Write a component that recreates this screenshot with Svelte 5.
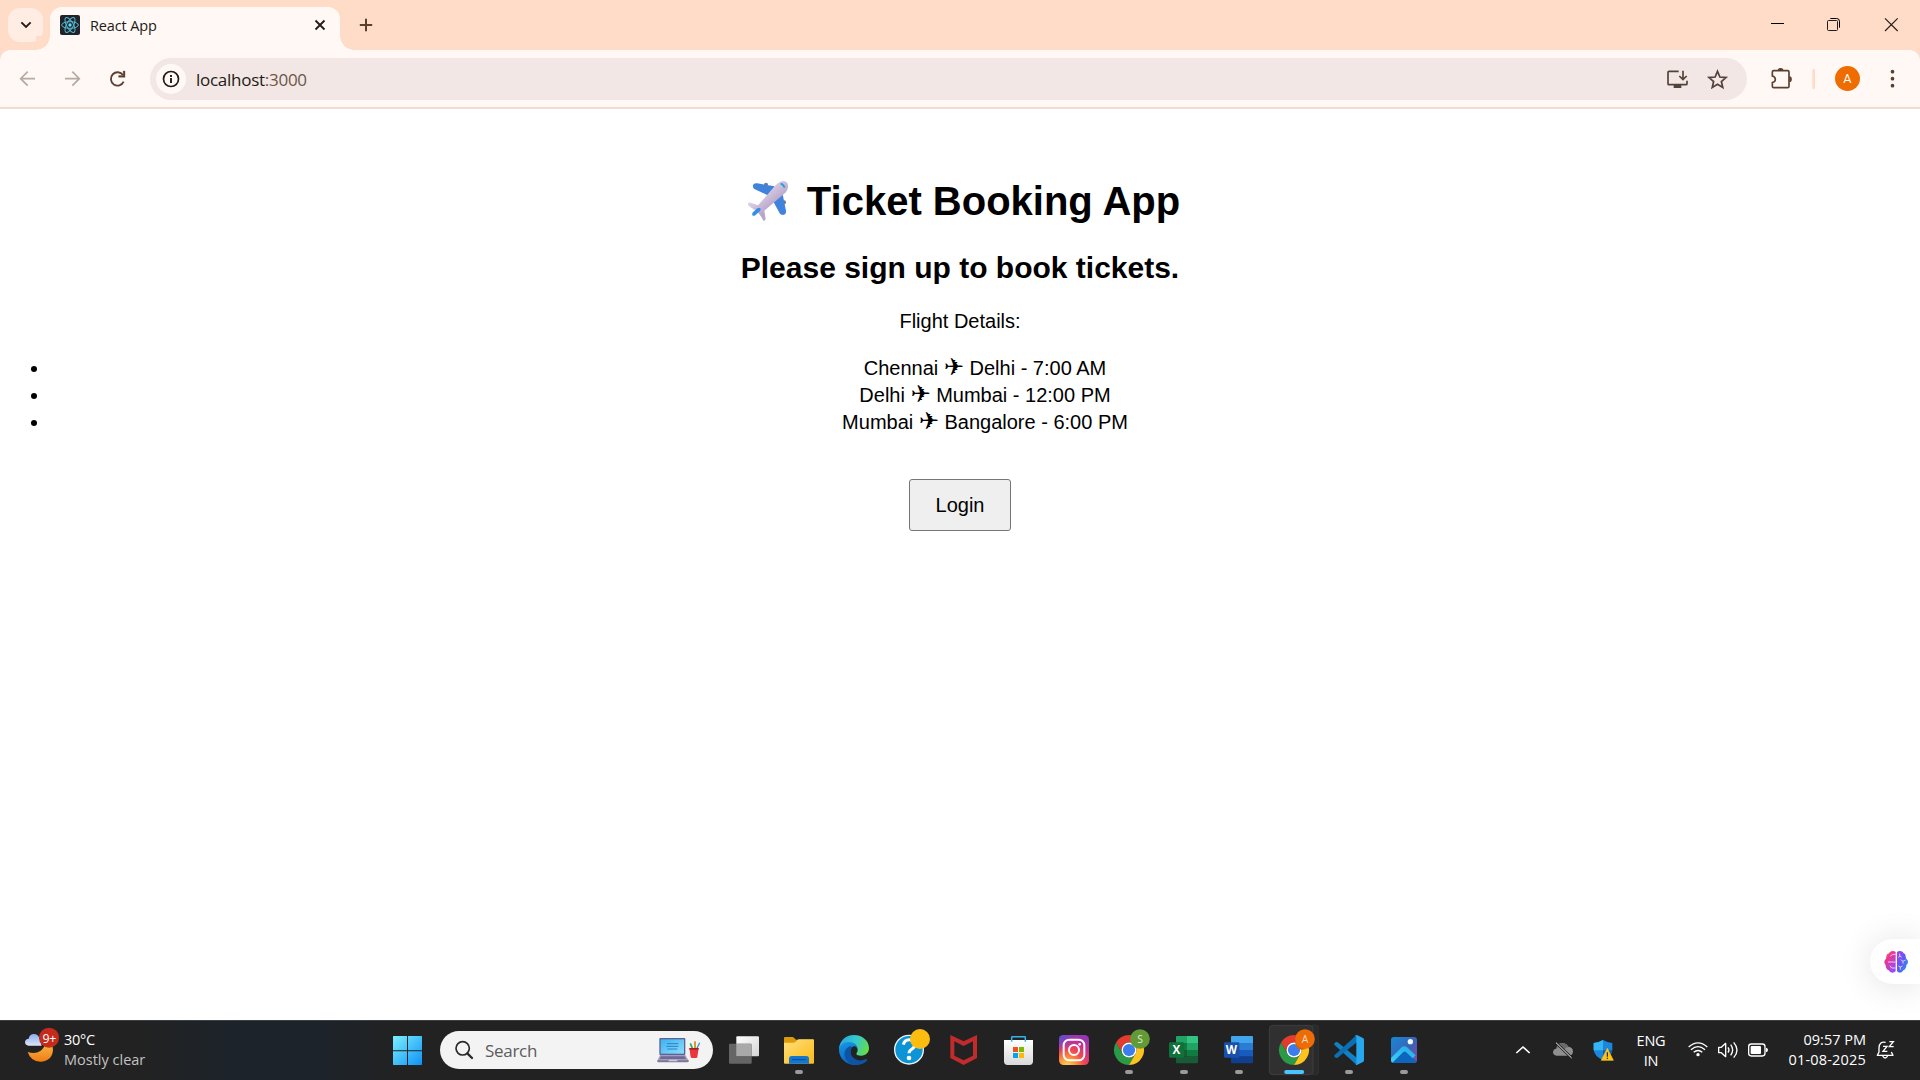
<script>
  const flights = [
    'Chennai|Delhi - 7:00 AM',
    'Delhi|Mumbai - 12:00 PM',
    'Mumbai|Bangalore - 6:00 PM'
  ].map((f) => f.split('|'));
</script>

{#snippet chromeLogo(x, y)}
  <g transform="translate({x} {y}) scale(1.875)">
    <path fill="#e33b2e" d="M44.785 12A24 24 0 0 0 3.215 12L13.607 30A12 12 0 0 1 24 12Z" />
    <path fill="#2a9a47" d="M3.215 12A24 24 0 0 0 24 48L34.392 30A12 12 0 0 1 13.608 30Z" />
    <path fill="#fcc31e" d="M24 48A24 24 0 0 0 44.785 12L24 12A12 12 0 0 1 34.392 30Z" />
    <circle cx="24" cy="24" r="12" fill="#fff" />
    <circle cx="24" cy="24" r="9.8" fill="#3b7ded" />
  </g>
{/snippet}

{#snippet taskView()}
  <defs>
    <linearGradient id="tv" x1="0" y1="0" x2="1" y2="1"><stop offset="0" stop-color="#fff" /><stop offset="1" stop-color="#d4d4d4" /></linearGradient>
  </defs>
  <rect x="79" y="79" width="68" height="60" rx="3" fill="url(#tv)" />
  <rect x="57" y="101" width="68" height="60" rx="3" fill="#6b6b6b" opacity=".92" />
  <rect x="79" y="101" width="45" height="37" fill="#a9a9a9" />
{/snippet}

{#snippet explorer()}
  <defs>
    <linearGradient id="ex" x1="0" y1="0" x2="1" y2="1"><stop offset="0" stop-color="#ffe07c" /><stop offset="1" stop-color="#fbba16" /></linearGradient>
  </defs>
  <path d="M222 84q0-3 3-3h22q3 0 5 2l6 6h51q3 0 3 3v20h-90z" fill="#dd9a0b" />
  <path d="M222 98h28q4 0 7-3l5-5q2-2 5-2h42q3 0 3 3v67q0 3-3 3h-84q-3 0-3-3z" fill="url(#ex)" />
  <path d="M237 161v-15q0-8 8-8h44q8 0 8 8v15z" fill="#1477cf" />
  <path d="M247 149h39" stroke="#0b4a8c" stroke-width="3" stroke-linecap="round" />
{/snippet}

{#snippet edge()}
  <defs>
    <linearGradient id="e1" x1="0" y1=".3" x2="1" y2=".6"><stop offset="0" stop-color="#2aa5e0" /><stop offset=".5" stop-color="#35c8cf" /><stop offset="1" stop-color="#66dd48" /></linearGradient>
    <linearGradient id="e2" x1="0" y1="0" x2=".4" y2="1"><stop offset="0" stop-color="#1698e4" /><stop offset="1" stop-color="#0a62c2" /></linearGradient>
  </defs>
  <path d="M387 119C387 93 407 75 432 75c26 0 45 18 45 39 0 14-10 23-23 23-10 0-15-3-15-6 0-2 4-4 4-11 0-9-9-17-22-17-14 0-27 7-34 16z" fill="url(#e1)" />
  <path d="M387 120c1-14 14-24 29-24 17 0 27 10 27 20 0 0-4-7-10-7-7 0-12 8-12 16 0 16 13 28 29 28 9 0 15-3 18-4 3-1 4 1 2 3-8 9-21 13-35 13-26 0-48-20-48-45z" fill="url(#e2)" />
  <path d="M421 108c-13 5-20 17-17 30 3 14 14 24 28 27 16 0 29-5 37-14 3-3 1-5-2-3-13 6-30 4-39-7-8-9-8-22-1-29z" fill="#0d55a4" />
{/snippet}

{#snippet help()}
  <circle cx="597" cy="119" r="43" fill="#0d94d6" stroke="#eef3f6" stroke-width="4" />
  <path d="M580 104q3-15 18-15 17 0 17 14 0 8-9 14-9 5-9 13" fill="none" stroke="#fff" stroke-width="9" />
  <circle cx="597" cy="144" r="7" fill="#fff" />
  <circle cx="630" cy="87" r="30" fill="#fdbd10" />
{/snippet}

{#snippet mcafee()}
  <path d="M721 75l40 19 40-19v69l-40 21-40-21zM733 94v43l28 14 28-14V94l-28 14z" fill="#c22b2b" fill-rule="evenodd" />
{/snippet}

{#snippet store()}
  <defs>
    <linearGradient id="st" x1="0" y1="0" x2="0" y2="1"><stop offset="0" stop-color="#fff" /><stop offset="1" stop-color="#d9d9d9" /></linearGradient>
  </defs>
  <path d="M882 90h87v64q0 11-11 11h-65q-11 0-11-11z" fill="url(#st)" />
  <path d="M905 95V82q0-2 2-2h37q2 0 2 2v13" fill="none" stroke="#30b4ee" stroke-width="4.5" />
  <rect x="909" y="111" width="15" height="15" fill="#f25022" /><rect x="927" y="111" width="15" height="15" fill="#7fba00" />
  <rect x="909" y="129" width="15" height="15" fill="#00a4ef" /><rect x="927" y="129" width="15" height="15" fill="#ffb900" />
{/snippet}

{#snippet instagram()}
  <defs>
    <radialGradient id="ig" cx=".28" cy="1.05" r="1.1"><stop offset="0" stop-color="#ffd75a" /><stop offset=".25" stop-color="#fc9a3e" /><stop offset=".5" stop-color="#f24a4d" /><stop offset=".75" stop-color="#cb2f91" /><stop offset="1" stop-color="#9636b4" /></radialGradient>
    <radialGradient id="ig2" cx="0" cy="0" r=".6"><stop offset="0" stop-color="#4759d8" /><stop offset="1" stop-color="#7b3fcf" stop-opacity="0" /></radialGradient>
  </defs>
  <rect x="27" y="75" width="90" height="90" rx="14" fill="url(#ig)" />
  <rect x="27" y="75" width="90" height="90" rx="14" fill="url(#ig2)" />
  <rect x="41" y="89" width="62" height="62" rx="17" fill="none" stroke="#fff" stroke-width="6" />
  <circle cx="72" cy="120" r="15" fill="none" stroke="#fff" stroke-width="6" />
  <circle cx="89" cy="103" r="4" fill="#fff" />
{/snippet}

{#snippet chromeS()}
  {@render chromeLogo(192, 75)}
  <circle cx="270" cy="87" r="29.5" fill="#629b35" />
  <text class="badge" x="270" y="98" fill="#e3ecd9">S</text>
{/snippet}

{#snippet chromeA()}
  <path d="M786 45h10q10 0 10 10v130q0 9-10 9h-10" fill="#2a2a2a" stroke="#383838" stroke-width="2" />
  <rect x="658" y="46" width="131" height="148" rx="11" fill="#303030" stroke="#424242" stroke-width="2.5" />
  {@render chromeLogo(687, 75)}
  <circle cx="756" cy="99" r="20" fill="#d85f08" />
  <circle cx="765" cy="87" r="29.5" fill="#ed6c05" />
  <text class="badge" x="765" y="98" fill="#f7dcc8">A</text>
{/snippet}

{#snippet excel()}
  <path d="M378 81q0-3 3-3h30v21h-33z" fill="#21a366" /><path d="M411 78h30q3 0 3 3v18h-33z" fill="#33c481" />
  <path d="M378 99h33v21h-33z" fill="#107c41" /><path d="M411 99h33v21h-33z" fill="#21a366" />
  <path d="M378 120h33v20h-33z" fill="#185c37" /><path d="M411 120h33v20h-33z" fill="#107c41" />
  <path d="M378 140h66v17q0 3-3 3h-60q-3 0-3-3z" fill="#185c37" />
  <rect x="357" y="97" width="46" height="46" rx="4" fill="#10713c" />
  <text class="office" x="379.500" y="132">X</text>
{/snippet}

{#snippet word()}
  <path d="M543 81q0-3 3-3h60q3 0 3 3v18h-66z" fill="#41a5ee" />
  <path d="M543 99h66v21h-66z" fill="#2b7cd3" /><path d="M543 120h66v20h-66z" fill="#185abd" />
  <path d="M543 140h66v17q0 3-3 3h-60q-3 0-3-3z" fill="#103f91" />
  <rect x="522" y="97" width="46" height="46" rx="4" fill="#1851ab" />
  <text class="office" x="544" y="132">W</text>
{/snippet}

{#snippet vscode()}
  <path d="M855 98q3-4 8-1l61 49-5 18-66-60q-2-3 2-6z" fill="#1280c4" />
  <path d="M855 142q3 4 8 1l61-49-5-18-66 60q-2 3 2 6z" fill="#0a6fb5" />
  <path d="M917 75q2 0 5 1l17 8q3 2 3 5v62q0 3-3 5l-17 8q-4 2-7-1 4 2 4-4V81q0-5-5-5 1-1 3-1z" fill="#27a8ee" />
{/snippet}

{#snippet photos()}
  <defs>
    <linearGradient id="ph" x1="0" y1="0" x2="1" y2="1"><stop offset="0" stop-color="#1688d8" /><stop offset=".55" stop-color="#3b62b4" /><stop offset="1" stop-color="#8a48a8" /></linearGradient>
    <linearGradient id="ph2" x1="0" y1="1" x2="1" y2="0"><stop offset="0" stop-color="#35d4f5" /><stop offset="1" stop-color="#28a9e8" /></linearGradient>
    <clipPath id="phc"><rect x="1023" y="81" width="78" height="78" rx="9" /></clipPath>
  </defs>
  <g clip-path="url(#phc)">
    <rect x="1023" y="81" width="78" height="78" fill="url(#ph)" />
    <path d="M1030 159l32-38 39 34v4z" fill="#0c66bd" />
    <path d="M1020 159v-12l35-35q8-7 16 0l26 24-9 9-20-19q-4-3-8 0l-34 33z" fill="url(#ph2)" />
  </g>
  <circle cx="1081" cy="95" r="8" fill="#f4f7fb" />
{/snippet}

{#snippet slot(x, art, state)}
  <button class="app" aria-label="app">
    <svg width="55" height="60" viewBox="{x - 1.5} 30 165 180">
      {@render art()}
      {#if state === 'open'}
        <rect x={x + 70.5} y="180" width="24" height="12" rx="6" fill="#9a9a9a" />
      {:else if state === 'active'}
        <rect x={x + 53} y="180" width="60" height="12" rx="6" fill="#4cc2ff" />
      {/if}
    </svg>
  </button>
{/snippet}

<div class="screen">
  <header class="tabs">
    <button class="tab-search" aria-label="Search tabs">
      <svg width="35" height="34" viewBox="24 24 105 102"><path d="M66 69l12 12 12-12" fill="none" stroke="#231a16" stroke-width="5.500" stroke-linecap="square" /></svg>
    </button>
    <div class="tab">
      <svg class="fav" width="20" height="20" viewBox="0 0 60 60">
        <rect width="60" height="60" rx="6" fill="#20232a" />
        <g fill="none" stroke="#53b9d3" stroke-width="3">
          <ellipse cx="30" cy="30" rx="25" ry="10" /><ellipse cx="30" cy="30" rx="25" ry="10" transform="rotate(60 30 30)" /><ellipse cx="30" cy="30" rx="25" ry="10" transform="rotate(120 30 30)" />
        </g>
        <circle cx="30" cy="30" r="5" fill="#61dafb" />
      </svg>
      <span class="tab-title">React App</span>
      <svg class="tab-x" width="12" height="12" viewBox="0 0 12 12"><path d="M1.500 1.500l9 9M10.500 1.500l-9 9" stroke="#231a16" stroke-width="1.800" /></svg>
    </div>
    <svg class="plus" width="14" height="14" viewBox="0 0 14 14"><path d="M7 .8v12.400M.8 7h12.400" stroke="#5a4030" stroke-width="2" /></svg>
    <svg class="win" width="160" height="50" viewBox="420 0 480 150" fill="none">
      <path d="M453 70.500h39" stroke="#000" stroke-width="3" />
      <rect x="622.500" y="61.500" width="30" height="30" rx="3" stroke="#241b16" stroke-width="3" />
      <path d="M631 55.500h19q8.500 0 8.500 8.500v19" stroke="#000" stroke-width="3" />
      <path d="M795 55l38 38M833 55l-38 38" stroke="#2a1e18" stroke-width="3.600" />
    </svg>
  </header>

  <nav class="toolbar">
    <svg class="nav-icons" width="150" height="58" viewBox="0 150 450 174" fill="none">
      <g stroke="#b7a9a3" stroke-width="5"><path d="M105 236H64M83 215l-21 21 21 21" /><path d="M195 236h41M217 215l21 21-21 21" /></g>
      <path d="M369 225a20 20 0 1 0 2 20" stroke="#5a4030" stroke-width="5.500" />
      <path d="M375 213v19h-19v-5.500h13.500V213z" fill="#5a4030" stroke="#5a4030" stroke-width="1" />
    </svg>
    <div class="omnibox">
      <svg class="info" width="30" height="30" viewBox="0 0 30 30"><circle cx="15" cy="15" r="15" fill="#fff8f5" /><circle cx="15" cy="15" r="7.500" fill="none" stroke="#231a16" stroke-width="1.700" /><path d="M15 14v5M15 11v1.900" stroke="#231a16" stroke-width="1.900" /></svg>
      <span class="url">localhost<span>:3000</span></span>
      <svg class="omni-icons" width="80" height="42" viewBox="141 174 240 126" fill="none" stroke="#54423a">
        <path d="M176 214h-29q-3 0-3 3v34q0 3 3 3h51q3 0 3-3v-9" stroke-width="5" />
        <path d="M161 254h23v10h-23z" fill="#54423a" stroke="none" />
        <path d="M189 212v26M178 228l11 11 11-11" stroke-width="5" />
        <path d="M292.500 214l7.200 17 18.300 1.600-13.900 12.100 4.200 17.900-15.800-9.500-15.800 9.500 4.200-17.900-13.900-12.100 18.300-1.600z" stroke-width="5.200" />
      </svg>
    </div>
    <svg class="tool-icons" width="173" height="58" viewBox="381 150 519 174" fill="none">
      <path d="M461 212h42q4 0 4 4v43q0 4-4 4h-42q-4 0-4-4v-11q9-2 9-10t-9-10v-12q0-4 4-4z" stroke="#5a4030" stroke-width="5" />
      <path d="M473 211a8.500 7 0 0 1 17 0zM508 229a7.500 9 0 0 1 0 18z" fill="#5a4030" />
      <rect x="577" y="207" width="8" height="60" rx="3" fill="#ffdcc8" />
      <circle cx="682.500" cy="235.500" r="37.500" fill="#ef6c00" />
      <text class="avatar" x="682.500" y="249.500">A</text>
      <g fill="#5a4030"><circle cx="817.500" cy="215" r="5.500" /><circle cx="817.500" cy="236" r="5.500" /><circle cx="817.500" cy="257" r="5.500" /></g>
    </svg>
  </nav>

  <main>
    <h1>
      <svg class="plane" width="42" height="42" viewBox="81 60 126 126">
        <defs>
          <linearGradient id="body" x1=".3" y1=".3" x2=".6" y2=".65"><stop offset="0" stop-color="#ddd3e4" /><stop offset="1" stop-color="#b9a5cb" /></linearGradient>
        </defs>
        <ellipse cx="138" cy="73" rx="6" ry="5" fill="#7e7380" /><ellipse cx="193" cy="127" rx="5" ry="6" fill="#7e7380" />
        <path d="M99 75q3-7 13-5l52 9-18 28-43-20q-5-3-4-12z" fill="#3f83dd" />
        <path d="M188 103l10 50q1 10-9 12-7 0-10-5l-20-37z" fill="#3f83dd" />
        <path d="M84 130q3-3 8-2l22 8 54-62q15-15 30-9 9 6 5 21-2 6-7 12l-63 54 4 25q-1 6-7 5-6-13-15-23-6-4-12-10-13-7-19-14z" fill="url(#body)" />
        <path d="M182 71q8 2 12 12" fill="none" stroke="#1ba3e6" stroke-width="5" />
        <path d="M97 166q-2-5 2-9l13-12q6-3 9 0 3 4-2 9l-13 12q-5 3-9 0z" fill="#368de8" />
      </svg>
      <span>Ticket Booking App</span>
    </h1>
    <h2>Please sign up to book tickets.</h2>
    <p>Flight Details:</p>
    <ul>
      {#each flights as [from, to]}
        <li>{from} <span class="sym">✈</span> {to}</li>
      {/each}
    </ul>
    <button class="login">Login</button>
  </main>

  <aside class="assistant">
    <svg width="24" height="24" viewBox="130 89 72 72">
      <defs>
        <linearGradient id="b1" x1="0" y1="0" x2=".6" y2="1"><stop offset="0" stop-color="#ff9a2e" /><stop offset=".35" stop-color="#f0368c" /><stop offset="1" stop-color="#9a4cf0" /></linearGradient>
        <linearGradient id="b2" x1="0" y1="0" x2="1" y2="1"><stop offset="0" stop-color="#a43df0" /><stop offset=".5" stop-color="#5c5cf2" /><stop offset="1" stop-color="#16a6f5" /></linearGradient>
      </defs>
      <path d="M165 95q-6-5-13-2-5 1-7 6-8 2-8 9 0 4-1 7-5 4-5 10t4 9q-1 7 3 11 2 4 6 5 4 7 11 7 6 0 10-4z" fill="url(#b1)" />
      <path d="M169 95q6-5 13-2 5 1 7 6 6 2 6 9 0 4 2 7 5 4 5 10t-5 9q1 7-3 11-2 4-6 5-3 7-10 7-5 0-9-4z" fill="url(#b2)" />
      <g fill="none" stroke="#f5ddfa" stroke-width="2.600"><path d="M165 102h-8l-8 5M142 125h23M148 136l5 7h12M177 100v8l6 2M177 108l-4 3M180 118l7 5 8-4M187 123v7M173 137l6 3 6-3M179 140v8" /></g>
    </svg>
  </aside>

  <footer>
    <div class="weather">
      <svg width="40" height="60" viewBox="69 30 120 180">
        <defs>
          <linearGradient id="moon" x1="0" y1="0" x2="0" y2="1"><stop offset="0" stop-color="#fbc04a" /><stop offset="1" stop-color="#f07c16" /></linearGradient>
          <linearGradient id="cl" x1="0" y1="0" x2="0" y2="1"><stop offset="0" stop-color="#88acec" /><stop offset="1" stop-color="#dce6f8" /></linearGradient>
        </defs>
        <path d="M139 91q20 9 20 29-3 34-38 35-29-1-38-29 22 8 38-3 16-12 18-32z" fill="url(#moon)" />
        <path d="M86 107q-11-1-11-11 1-9 11-10 3-14 15-14 13 0 17 12l7 23z" fill="url(#cl)" />
        <circle cx="147" cy="83" r="30" fill="#c42b1c" />
        <text class="count" x="147.500" y="98">9+</text>
      </svg>
      <div><span class="temp">30°C</span><span class="cond">Mostly clear</span></div>
    </div>
    <div class="apps">
      <svg class="start" width="55" height="60" viewBox="0 30 165 180">
        <defs><linearGradient id="w" gradientUnits="userSpaceOnUse" x1="39" y1="78" x2="125" y2="164"><stop offset="0" stop-color="#7bf0fd" /><stop offset="1" stop-color="#0f93f5" /></linearGradient></defs>
        <path d="M41 78h40v43H39V80q0-2 2-2zM84 78h40q2 0 2 2v41H84zM39 124h42v41H41q-2 0-2-2zM84 124h42v39q0 2-2 2H84z" fill="url(#w)" />
      </svg>
      <div class="search">
        <svg width="20" height="20" viewBox="219 91 60 60" fill="none"><circle cx="245" cy="116" r="20" stroke="#2a2a2a" stroke-width="5" /><path d="M259 131l14 14" stroke="#2a2a2a" stroke-width="7" stroke-linecap="round" /></svg>
        <span>Search</span>
        <svg class="desk" width="44" height="26" viewBox="827 84 132 78">
          <defs><linearGradient id="scr" x1="0" y1="0" x2="1" y2="1"><stop offset="0" stop-color="#3db2f0" /><stop offset="1" stop-color="#8fdcfb" /></linearGradient></defs>
          <rect x="834" y="87" width="78" height="51" rx="3" fill="#5a6490" /><rect x="838" y="91" width="70" height="43" fill="url(#scr)" />
          <path d="M857 104h34M855 112h36M858 120h30" stroke="#2484cc" stroke-width="3" />
          <path d="M836 138h76l10 17q0 4-4 4h-86q-4 0-4-4z" fill="#a39fc0" /><path d="M839 142h70l5 8h-79z" fill="#6f6a92" /><path d="M828 154h94v2q0 4-4 4h-86q-4 0-4-4z" fill="#7d7794" /><path d="M863 152h24l2 5h-28z" fill="#cdc7df" />
          <path d="M933 118l-6-15" stroke="#3aa55a" stroke-width="5" /><path d="M941 118V97" stroke="#d59b2d" stroke-width="6" /><path d="M947 118l8-17" stroke="#3e8dd6" stroke-width="4" />
          <path d="M924 117h28l-4 28q-1 2-4 2h-12q-3 0-4-2z" fill="#e8383d" /><path d="M924 117h28l-1 5h-26z" fill="#a91f28" />
        </svg>
      </div>
      <div class="pinned">
        {@render slot(19.5, taskView, '')}
        {@render slot(184.5, explorer, 'open')}
        {@render slot(349.5, edge, '')}
        {@render slot(514.5, help, '')}
        {@render slot(679.5, mcafee, '')}
        {@render slot(844.5, store, '')}
        {@render slot(-10.5, instagram, '')}
        {@render slot(154.5, chromeS, 'open')}
        {@render slot(319.5, excel, 'open')}
        {@render slot(484.5, word, 'open')}
        {@render slot(649.5, chromeA, 'active')}
        {@render slot(814.5, vscode, 'open')}
        {@render slot(979.5, photos, 'open')}
      </div>
    </div>
    <div class="tray">
      <svg width="121" height="60" viewBox="69 30 363 180" fill="none">
        <path d="M109 129l20-18 20 18" stroke="#fff" stroke-width="5" />
        <path d="M230 137q-11-1-11-11 1-9 10-10 1-15 16-17 13-1 20 11 14 1 14 15-1 11-12 12z" fill="#8f8f8f" />
        <path d="M238 103q10-7 19-1 6 3 8 9-9 1-12 8-9-10-22-6 1-7 7-10z" fill="#6a6a6a" />
        <path d="M228 98l47 46" stroke="#232323" stroke-width="8" /><path d="M228 98l47 46" stroke="#eee" stroke-width="3" />
        <path d="M341 99q15-1 28-9 13 8 28 9v21q-3 20-28 30-25-10-28-30z" fill="#1b86dc" />
        <path d="M341 99q15-1 28-9v31h-28z" fill="#35b5f3" /><path d="M369 121h28q-3 20-28 29z" fill="#0c5cb4" />
        <path d="M382 115l18 36h-36z" fill="#fcc419" stroke="#fcc419" stroke-width="2" stroke-linejoin="round" /><path d="M382 127v13M382 143v4" stroke="#222" stroke-width="3.500" />
      </svg>
      <div class="lang"><span>ENG</span><span>IN</span></div>
      <svg width="100" height="60" viewBox="594 30 300 180" fill="none" stroke="#fff" stroke-width="4">
        <path d="M626 111q28-25 56 0" /><path d="M633 119q21-18 42 0" /><path d="M641 127q13-11 26 0" /><circle cx="654" cy="134" r="5" fill="#fff" stroke="none" />
        <path d="M716 112h8l13-12v40l-13-12h-8z" stroke-linejoin="round" /><path d="M744 112q6 8 0 16M752 104q12 16 0 32M761 97q20 23 0 46" />
        <rect x="806" y="102" width="49" height="36" rx="8" /><rect x="812" y="108" width="31" height="24" rx="3" fill="#fff" stroke="none" /><path d="M858 113q6 1 6 7t-6 7z" fill="#fff" stroke="none" />
      </svg>
      <div class="clock"><span>09:57 PM</span><span class="date">01-08-2025</span></div>
      <svg width="54" height="60" viewBox="1158 30 162 180" fill="none" stroke="#fff" stroke-width="4">
        <path d="M1217 97q-19-4-20 17v12l-5 10h47l-5-10M1208 138q7 12 15 0" stroke-linejoin="round" />
        <path d="M1209 109h12l-12 15h13M1228 95h12l-12 15h13" stroke-width="4" />
      </svg>
    </div>
  </footer>
</div>

<style>
  :global(body) { margin: 0; overflow: hidden; }
  button { border: 0; padding: 0; background: none; font: inherit; }
  svg { display: block; flex: none; }
  .screen {
    position: relative; width: 1920px; height: 1080px; display: flex; flex-direction: column;
    background: #fff; font-family: "Open Sans", "Noto Sans", sans-serif; overflow: hidden;
  }
  .tabs { height: 50px; flex: none; display: flex; background: #ffdcc8; }
  .tab-search { width: 35px; height: 34px; margin: 8px 7px 0 8px; border-radius: 12px; background: #ffede3; }
  .tab {
    position: relative; box-sizing: border-box; width: 290px; height: 43px; margin-top: 7px; padding: 0 14px 7px 10px;
    display: flex; align-items: center; border-radius: 12px 12px 0 0; background: #fff8f5;
  }
  .tab::before, .tab::after { content: ""; position: absolute; bottom: 0; width: 14px; height: 14px; }
  .tab::before { left: -14px; background: radial-gradient(circle at 0 0, #ffdcc8 13.500px, #fff8f5 14px); }
  .tab::after { right: -14px; background: radial-gradient(circle at 100% 0, #ffdcc8 13.500px, #fff8f5 14px); }
  .tab-title { margin-left: 10px; font-size: 14.500px; letter-spacing: -0.120px; color: #231a16; }
  .tab-x { margin-left: auto; }
  .plus { margin: 18px 0 0 19px; }
  .win { margin-left: auto; }

  .toolbar {
    height: 57px; flex: none; display: flex; border-bottom: 2px solid #f3dccf;
    background: radial-gradient(circle at 10px 10px, #fff8f5 9.500px, #ffdcc8 10px) 0 0 / 10px 10px no-repeat,
      radial-gradient(circle at 0 10px, #fff8f5 9.500px, #ffdcc8 10px) 100% 0 / 10px 10px no-repeat, #fff8f5;
  }
  .omnibox {
    box-sizing: border-box; flex: 1; height: 42px; margin-top: 8px; padding-left: 6px; display: flex; align-items: center;
    border-radius: 21px; background: #f2e7e4;
  }
  .url { margin-left: 10px; font-size: 17px; letter-spacing: -0.270px; color: #231a16; }
  .url span { color: #6d5548; }
  .omni-icons { margin-left: auto; }
  .avatar { font: 38px Roboto, sans-serif; fill: #fff; text-anchor: middle; }

  main { flex: 1; text-align: center; font: 20px "Liberation Sans", Arial, sans-serif; color: #000; }
  h1 { display: flex; justify-content: center; align-items: center; gap: 18px; margin: 69px 0 0; padding-left: 7px; height: 46px; font-size: 40px; }
  h2 { margin: 27px 0 0; font-size: 30px; line-height: 34px; }
  p { margin: 25px 0 0; line-height: 23px; }
  ul { margin: 22px 0 0; padding-left: 50px; }
  li { height: 27px; line-height: 27px; }
  .sym { font-family: "DejaVu Sans", sans-serif; font-size: 24px; line-height: 1; }
  .login { width: 102px; height: 52px; margin-top: 43px; border: 1px solid #767676; border-radius: 3px; background: #efefef; }

  .assistant {
    position: absolute; right: 0; top: 939px; width: 50px; height: 45px; box-sizing: border-box; padding: 11px 0 0 14px;
    border-radius: 23px 0 0 23px; background: #fff; box-shadow: 0 2px 34px rgb(0 0 0 / 0.12);
  }

  footer {
    position: relative; height: 60px; flex: none; box-sizing: border-box; display: flex;
    background: linear-gradient(90deg, #222 0, #222 140px, #1c232b 240px, #1c232b 310px, #222 400px);
    box-shadow: inset 0 1px #3b4044; color: #fff;
  }
  .weather { width: 357px; padding-left: 23px; display: flex; font-size: 14.500px; }
  .weather div { display: flex; flex-direction: column; padding-top: 10px; margin-left: 1px; line-height: 20px; }
  .temp { letter-spacing: -0.300px; }
  .cond { color: #c2c2c2; }
  .count { font: 37px "Open Sans", sans-serif; letter-spacing: -1px; fill: #fff; text-anchor: middle; }
  .apps { display: flex; }
  .search {
    box-sizing: border-box; width: 273px; height: 38px; margin: 11px 3px 0 5px; padding: 0 12px 0 14px; display: flex; align-items: center;
    border-radius: 19px; background: #f3f3f3; color: #5c5c5c; font-size: 17px;
  }
  .search span { margin-left: 11px; letter-spacing: -0.300px; }
  .desk { margin-left: auto; }
  .pinned { display: flex; }
  .app { width: 55px; height: 60px; }
  .badge { font: 31px "Open Sans", sans-serif; text-anchor: middle; }
  .office { font: bold 35px "Open Sans", sans-serif; fill: #fff; text-anchor: middle; }
  .tray { display: flex; margin-left: auto; font-size: 14.500px; line-height: 20px; }
  .lang, .clock { display: flex; flex-direction: column; }
  .lang { width: 54px; padding-top: 11px; align-items: center; letter-spacing: -0.200px; }
  .clock { width: 88px; padding-top: 10px; align-items: flex-end; }
  .date { letter-spacing: 0.180px; }
</style>
